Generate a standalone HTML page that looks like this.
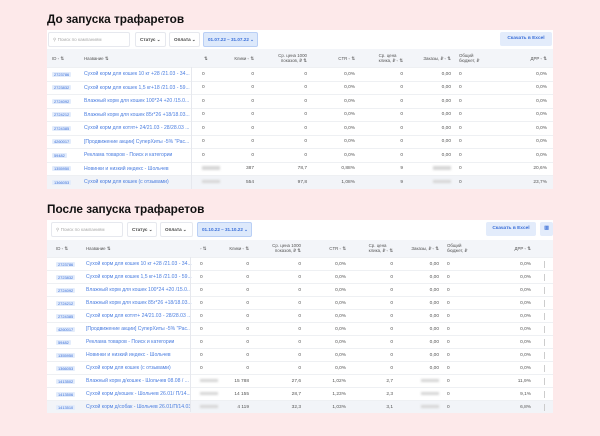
<!DOCTYPE html><html><head><meta charset="utf-8"><style>
*{margin:0;padding:0;box-sizing:border-box}
body{width:600px;height:436px;background:#fde9ea;font-family:"Liberation Sans",Arial,sans-serif;position:relative;overflow:hidden;color:#555}
h1{position:absolute;left:47px;font-size:11.8px;font-weight:bold;color:#111}
.p{position:absolute;left:47px;width:506px;background:#fff}
.tb{position:relative;height:19px;background:#fff}
.bx{position:absolute;top:2px;height:15px;border:1px solid #e6e8ee;border-radius:2px;font-size:4.6px;line-height:13px;padding-left:4px;color:#444;font-weight:bold}
.dt{background:#dde9fb;border-color:#b9cff5;color:#3a6fd8}
.xl{position:absolute;top:2px;height:14px;background:#e3ecfb;color:#3a6fd8;font-size:4.8px;line-height:14px;text-align:center;font-weight:bold;border-radius:2px}
.hd{position:relative;background:#f3f5f9;font-size:4.4px;color:#555}
.r{position:relative;border-top:1px solid #eef0f3;font-size:4.8px;color:#555}
.r span,.hd span{position:absolute;white-space:nowrap}
.id{background:#e3ecfb;color:#3a6fd8;font-size:3.9px;padding:0 2px;border-radius:1px}
.nm{color:#4b7ee0;font-size:5.1px}
.bl{display:inline-block;width:18px;height:3.5px;background:#d6d6d6;filter:blur(1px)}
.dv{position:absolute;top:0;bottom:0;width:1px;background:#e6e8ee}
.g{background:#f2f4f8}
.k{width:1.2px;height:7px;background:#ccc}
</style></head><body>

<h1 style="top:12px">До запуска трафаретов</h1>
<div class="p" style="top:30px;height:159px">
 <div class="tb">
  <div class="bx" style="left:1px;width:82px;color:#aaa;font-weight:normal">&#9906;&nbsp;Поиск по кампаниям</div>
  <div class="bx" style="left:88px;width:31px">Статус ⌄</div>
  <div class="bx" style="left:122px;width:31px">Оплата ⌄</div>
  <div class="bx dt" style="left:156px;width:55px">01.07.22 – 31.07.22 ⌄</div>
  <div class="xl" style="left:453px;width:52px">Скачать в Excel</div>
 </div>
 <div class="hd" style="height:18px">
  <span style="left:5px;top:7px">ID ◦ ⇅</span><span style="left:37px;top:7px">Название ⇅</span>
  <span style="left:157px;top:7px">⇅</span><span style="right:299px;top:7px">Клики ◦ ⇅</span>
  <span style="right:246px;top:4px;text-align:right;line-height:5px">Ср. цена 1000<br>показов, ₽ ⇅</span>
  <span style="right:198px;top:7px">CTR ◦ ⇅</span>
  <span style="right:150px;top:4px;line-height:5px">Ср. цена<br>клика, ₽ ◦ ⇅</span>
  <span style="right:102px;top:7px">Заказы, ₽ ◦ ⇅</span>
  <span style="left:412px;top:4px;line-height:5px">Общий<br>бюджет, ₽</span>
  <span style="right:6px;top:7px">ДРР ◦ ⇅</span>
 </div>
 <div id="t1"></div>
</div>

<h1 style="top:202px">После запуска трафаретов</h1>
<div class="p" style="top:220px;height:192px">
 <div class="tb" style="height:20px">
  <div class="bx" style="left:4px;width:72px;color:#aaa;font-weight:normal">&#9906;&nbsp;Поиск по кампаниям</div>
  <div class="bx" style="left:80px;width:30px">Статус ⌄</div>
  <div class="bx" style="left:113px;width:33px">Оплата ⌄</div>
  <div class="bx dt" style="left:150px;width:55px">01.10.22 – 31.10.22 ⌄</div>
  <div class="xl" style="left:439px;width:50px">Скачать в Excel</div>
  <div class="xl" style="left:493px;width:13px">▥</div>
 </div>
 <div class="hd" style="height:17px">
  <span style="left:9px;top:6px">ID ◦ ⇅</span><span style="left:39px;top:6px">Название ⇅</span>
  <span style="left:153px;top:6px">◦ ⇅</span><span style="right:304px;top:6px">Клики ◦ ⇅</span>
  <span style="right:252px;top:3px;text-align:right;line-height:5px">Ср. цена 1000<br>показов, ₽ ⇅</span>
  <span style="right:207px;top:6px">CTR ◦ ⇅</span>
  <span style="right:160px;top:3px;line-height:5px">Ср. цена<br>клика, ₽ ◦ ⇅</span>
  <span style="right:114px;top:6px">Заказы, ₽ ◦ ⇅</span>
  <span style="left:400px;top:3px;line-height:5px">Общий<br>бюджет, ₽</span>
  <span style="right:22px;top:6px">ДРР ◦ ⇅</span>
 </div>
 <div id="t2"></div>
</div>

<script>
var names=["Сухой корм для кошек 10 кг +28 /21.03 - 34...","Сухой корм для кошек 1,5 кг+18 /21.03 - 59...","Влажный корм для кошек 100*24 +20 /15.0...","Влажный корм для кошек 85г*26 +18/18.03...","Сухой корм для котят+ 24/21.03 - 28/28.03 ...","[Продвижение акции] СуперХиты -5% \"Рас...","Реклама товаров - Поиск и категории","Новинки и низкий индекс - Шольчев","Сухой корм для кошек (с отзывами)"];
var ids=["2723786","2723832","2724092","2724212","2724385","4260017","59482","1355950","1366053"];
var B='<i class="bl"></i>';
function rows(el,c,data){var h="";data.forEach(function(d,i){var last=i==data.length-1;
h+='<div class="r'+(last?' g':'')+'" style="height:'+c.h+'px">'+
'<span class="id" style="left:'+c.id+'px;top:'+(c.h/2-3)+'px">'+d[0]+'</span>'+
'<span class="nm" style="left:'+c.nm+'px;top:'+(c.h/2-3.3)+'px">'+d[1]+'</span>'+
'<span style="left:'+c.c3+'px;top:'+(c.h/2-3)+'px">'+d[2]+'</span>';
var rs=c.rs;for(var j=0;j<5;j++)h+='<span style="right:'+rs[j]+'px;top:'+(c.h/2-3)+'px">'+d[3+j]+'</span>';
h+='<span style="left:'+c.bu+'px;top:'+(c.h/2-3)+'px">0</span><span style="right:'+c.dr+'px;top:'+(c.h/2-3)+'px">'+d[8]+'</span>';
if(c.k)h+='<span class="k" style="left:'+c.k+'px;top:'+(c.h/2-3.5)+'px"></span>';
h+='</div>';});
el.innerHTML=h+'<div class="dv" style="left:'+c.dv+'px;top:37px"></div>';}
var d1=[];for(var i=0;i<7;i++)d1.push([ids[i],names[i],"0","0","0","0,0%","0","0,00","0,0%"]);
d1.push([ids[7],names[7],B,"387","78,7","0,88%","9",B,"20,6%"]);
d1.push([ids[8],names[8],B,"554","97,8","1,08%","9",B,"23,7%"]);
rows(document.getElementById('t1'),{h:13.5,id:5,nm:37,c3:155,rs:[299,246,198,150,102],bu:412,dr:6,dv:144},d1);
var d2=[];for(var i=0;i<9;i++)d2.push([ids[i],names[i],"0","0","0","0,0%","0","0,00","0,0%"]);
d2.push(["1413502","Влажный корм д/кошек - Шольчев 08.08 / ...",B,"15 788","27,6","1,02%","2,7",B,"11,9%"]);
d2.push(["1413506","Сухой корм д/кошек - Шольчев 26.01/ П/14...",B,"14 155","28,7","1,23%","2,3",B,"9,1%"]);
d2.push(["1413510","Сухой корм д/собак - Шольчев 26.01/П/14.03",B,"4 119","32,3","1,03%","3,1",B,"6,8%"]);
rows(document.getElementById('t2'),{h:13,id:9,nm:39,c3:153,rs:[304,252,207,160,114],bu:400,dr:22,dv:143,k:497},d2);
</script>
</body></html>
